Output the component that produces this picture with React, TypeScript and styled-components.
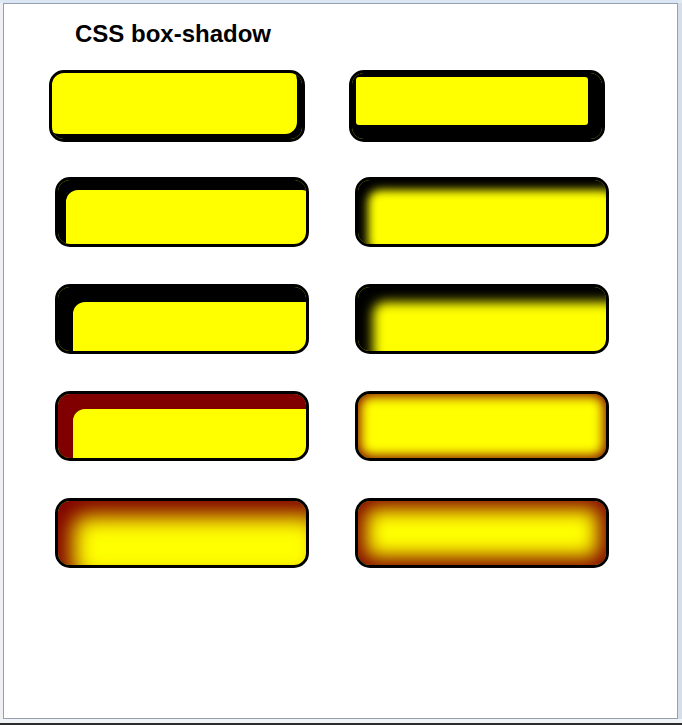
import React from "react";
import styled, { createGlobalStyle } from "styled-components";

const Global = createGlobalStyle`
  html, body { margin: 0; padding: 0; }
  body { background: #dfe8f3; font-family: "Liberation Sans", Arial, sans-serif; }
`;

const Frame = styled.div`
  width: 682px;
  height: 725px;
  box-sizing: border-box;
  display: flex;
  flex-direction: column;
  background: #dfe8f3;
`;

const TopBand = styled.div`
  height: 3px;
  background: #dbe6f4;
  margin-left: 3px;
  margin-right: 4px;
`;

const Middle = styled.div`
  flex: 1;
  display: flex;
  background: linear-gradient(to right, #eef0f3 0 3px, transparent 3px);
`;

const Content = styled.div`
  margin-left: 3px;
  width: 675px;
  box-sizing: border-box;
  border: 1px solid #949faf;
  background: #ffffff;
  padding: 16px 0 0 71px;
`;

const RightEdge = styled.div`
  flex: 1;
  background: #d6dee9;
`;

const BottomBand = styled.div`
  height: 6px;
  background: linear-gradient(to bottom, #f2f3f5 0 4px, #2b2b2b 4px);
`;

const Title = styled.h2`
  margin: 0 0 22px 0;
  font-size: 24px;
  line-height: 28px;
  font-weight: bold;
  color: #000;
`;

const Grid = styled.div`
  display: flex;
  flex-direction: column;
  gap: 37px;
  margin-left: -20px;
`;

const Row = styled.div<{ $first?: boolean }>`
  display: flex;
  gap: ${(p) => (p.$first ? "44px" : "46px")};
  margin-left: ${(p) => (p.$first ? "-6px" : "0")};
  margin-bottom: ${(p) => (p.$first ? "-2px" : "0")};
`;

const Box = styled.div<{ $shadow: string; $wide?: boolean }>`
  box-sizing: border-box;
  width: ${(p) => (p.$wide ? "256px" : "254px")};
  height: ${(p) => (p.$wide ? "72px" : "70px")};
  border: 3px solid #000;
  border-radius: 15px;
  background: #ffff00;
  box-shadow: ${(p) => p.$shadow};
`;

const rows: string[][] = [
  ["inset -5px -5px 0 #000", "inset -5px -5px 0 9px #000"],
  ["inset 8px 10px 0 #000", "inset 10px 10px 10px #000"],
  ["inset 15px 15px 0 #000", "inset 15px 15px 12px #000"],
  ["inset 15px 15px 0 #800000", "inset 0 0 12px 2px #800000"],
  ["inset 15px 15px 22px #800000", "inset 0 0 20px 8px #800000"],
];

export default function App() {
  return (
    <>
      <Global />
      <Frame>
        <TopBand />
        <Middle>
          <Content>
            <Title>CSS box-shadow</Title>
            <Grid>
              {rows.map((r, i) => (
                <Row key={i} $first={i === 0}>
                  {r.map((s, j) => (
                    <Box key={j} $shadow={s} $wide={i === 0} />
                  ))}
                </Row>
              ))}
            </Grid>
          </Content>
          <RightEdge />
        </Middle>
        <BottomBand />
      </Frame>
    </>
  );
}
